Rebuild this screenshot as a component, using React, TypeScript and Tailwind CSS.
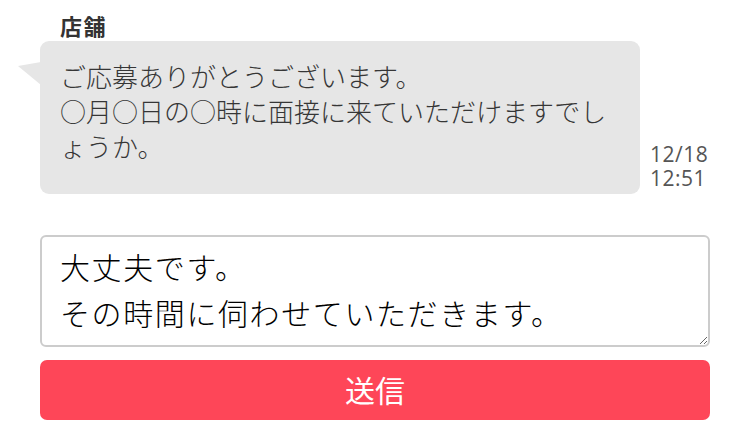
export default function App() {
  const jp = { fontFamily: '"Open Sans", "Noto Sans CJK JP", sans-serif' };

  return (
    <main className="min-h-screen bg-white" style={jp}>
      <div className="w-[670px] ml-[40px] pt-[12px]">
        {/* SHOP MESSAGE */}
        <p className="ml-[20px] text-[22px] leading-[28px] font-bold tracking-[1.5px] text-[#333]">店舗</p>
        <div className="flex items-end gap-[10px] mt-[1px]">
          <div className="relative w-[600px] h-[153px] bg-[#e6e6e6] rounded-[9px] pl-[20px] pr-[30px] pt-[19px]">
            <svg className="absolute left-[-22px] top-[21px]" width="23" height="23" viewBox="0 0 23 23">
              <polygon points="23,0 0,4 23,23" fill="#e6e6e6" />
            </svg>
            <p className="text-[26px] leading-[35px] font-light text-[#363636]">
              ご応募ありがとうございます。
              <br />
              ○月○日の○時に面接に来ていただけますでしょうか。
            </p>
          </div>
          <div className="text-[21px] leading-[24px] tracking-[0.5px] text-[#555] pb-[4px]">
            <p>12/18</p>
            <p>12:51</p>
          </div>
        </div>

        {/* REPLY FORM */}
        <textarea
          className="block w-full h-[112px] mt-[41px] border-2 border-[#cccccc] rounded-[6px] px-[18px] pt-[8px] text-[30px] leading-[46px] tracking-[1.6px] font-light text-black outline-none"
          style={jp}
          defaultValue={"大丈夫です。\nその時間に伺わせていただきます。"}
        />
        <button
          className="block w-full h-[60px] mt-[13px] bg-[#fe4658] rounded-[7px] text-white text-[30px]"
          style={jp}
        >
          送信
        </button>
      </div>
    </main>
  );
}
